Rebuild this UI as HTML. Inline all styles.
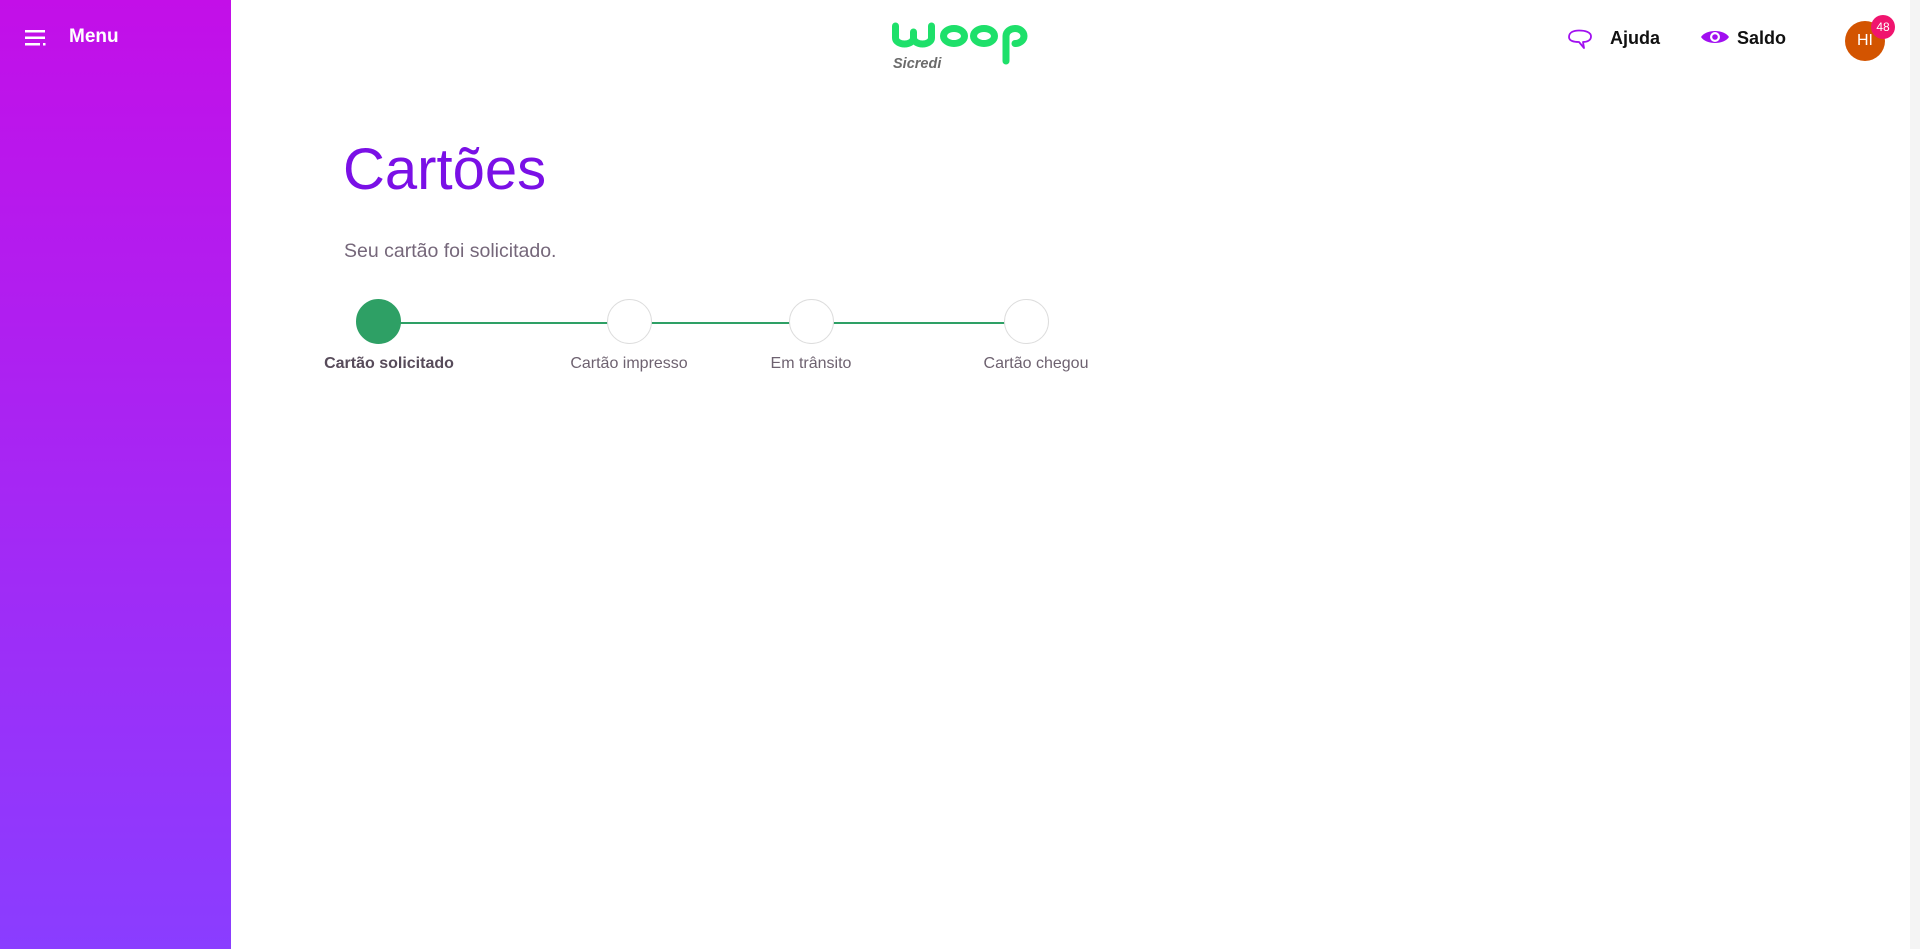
<!DOCTYPE html>
<html><head><meta charset="utf-8"><style>
*{margin:0;padding:0;box-sizing:border-box}
body{width:1920px;height:949px;overflow:hidden;background:#fff;font-family:"Liberation Sans",sans-serif;position:relative}
.side{position:absolute;left:0;top:0;width:231px;height:949px;background:linear-gradient(180deg,#c30fe8 0%,#8a3dff 100%)}
.menu{position:absolute;left:69px;top:26px;color:#fff;font-weight:bold;font-size:19px}
.abs{position:absolute}
.lbl{position:absolute;top:355px;font-size:16px;color:#6e6270;transform:translateX(-50%);white-space:nowrap}
.c{position:absolute;top:299px;width:45px;height:45px;border-radius:50%;border:1px solid #ddd;background:#fff}
</style></head><body>
<div class="side">
<svg class="abs" style="left:25px;top:30px" width="22" height="16"><rect x="0" y="0" width="20" height="2.5" fill="#fff"/><rect x="0" y="6.5" width="20" height="2.5" fill="#fff"/><rect x="0" y="13" width="15" height="2.5" fill="#fff"/><rect x="18" y="13" width="2.5" height="2.5" fill="#fff"/></svg>
<div class="menu">Menu</div>
</div>
<svg class="abs" style="left:888px;top:20px" width="145" height="52" viewBox="0 0 145 52">
<g fill="none" stroke="#1ee06a" stroke-width="7" stroke-linecap="round">
<path d="M7.5 6 V18 a9 6 0 0 0 18 0 V12 M25.5 12 V18 a9 6 0 0 0 18 0 V6"/>
<ellipse cx="66" cy="16" rx="10.5" ry="7.5"/>
<ellipse cx="96" cy="16" rx="10.5" ry="7.5"/>
<path d="M118 41 V16 a9 7.5 0 1 1 9 7.5"/>
</g>
<text x="5" y="48" font-family="Liberation Sans" font-weight="bold" font-style="italic" font-size="14.5" fill="#6b6b6b">Sicredi</text>
</svg>
<svg class="abs" style="left:1566px;top:29px" width="28" height="22" viewBox="0 0 28 22"><path d="M3 8 C3 3 8 1.5 13 1.5 C19 1.5 25 3 25 7.5 C25 11.5 21 13 17 13 L18 19 L13 13 C8 13 3 12 3 8Z" fill="none" stroke="#a10ff0" stroke-width="1.8" stroke-linejoin="round"/></svg>
<div class="abs" style="left:1610px;top:28px;font-size:18px;font-weight:bold;color:#111">Ajuda</div>
<svg class="abs" style="left:1700px;top:28px" width="30" height="18" viewBox="0 0 30 18"><path d="M1 9 C6 1 24 1 29 9 C24 17 6 17 1 9Z" fill="#a10ff0"/><circle cx="15" cy="9" r="5" fill="#fff"/><circle cx="15" cy="9" r="2.8" fill="#a10ff0"/></svg>
<div class="abs" style="left:1737px;top:28px;font-size:18px;font-weight:bold;color:#111">Saldo</div>
<div class="abs" style="left:1845px;top:21px;width:40px;height:40px;border-radius:50%;background:#d35400;color:#fff;font-size:16px;line-height:40px;text-align:center">HI</div>
<div class="abs" style="left:1871px;top:15px;width:24px;height:24px;border-radius:50%;background:#f0146e;color:#fff;font-size:12px;line-height:24px;text-align:center">48</div>
<div class="abs" style="right:0;top:0;width:10px;height:949px;background:#f4f4f4"></div>
<div class="abs" style="left:343px;top:136px;font-size:58px;color:#7a10e6">Cartões</div>
<div class="abs" style="left:344px;top:240px;font-size:19.5px;color:#75677a">Seu cartão foi solicitado.</div>
<div class="abs" style="left:378px;top:322px;width:648px;height:2px;background:#2ea065"></div>
<div class="c" style="left:356px;background:#2ea065;border-color:#2ea065"></div>
<div class="c" style="left:607px"></div>
<div class="c" style="left:789px"></div>
<div class="c" style="left:1004px"></div>
<div class="lbl" style="left:389px;font-weight:bold;color:#574b5a">Cartão solicitado</div>
<div class="lbl" style="left:629px">Cartão impresso</div>
<div class="lbl" style="left:811px">Em trânsito</div>
<div class="lbl" style="left:1036px">Cartão chegou</div>
</body></html>
